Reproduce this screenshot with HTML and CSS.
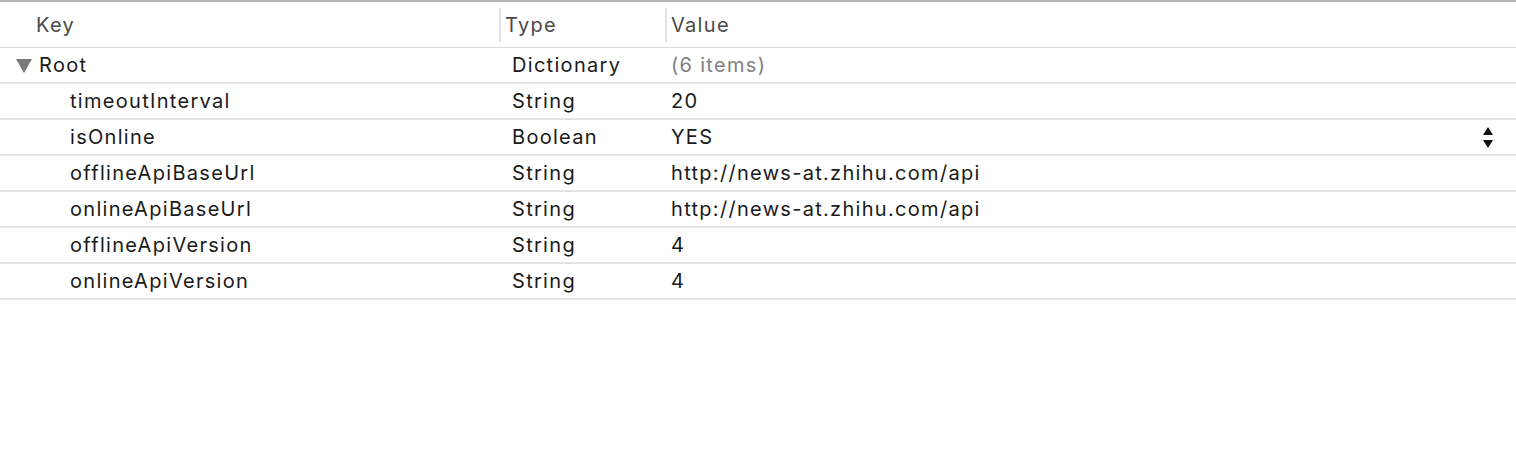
FILE: index.html
```html
<!DOCTYPE html>
<html>
<head>
<meta charset="utf-8">
<link rel="stylesheet" href="styles.css">
</head>
<body>
<div class="table">
  <div class="header">
    <div class="hcell key">Key</div>
    <div class="hcell type">Type</div>
    <div class="hcell value">Value</div>
  </div>
  <div class="row">
    <div class="cell key root"><span class="tri"></span>Root</div>
    <div class="cell type">Dictionary</div>
    <div class="cell value muted">(6 items)</div>
  </div>
  <div class="row">
    <div class="cell key child">timeoutInterval</div>
    <div class="cell type">String</div>
    <div class="cell value">20</div>
  </div>
  <div class="row">
    <div class="cell key child">isOnline</div>
    <div class="cell type">Boolean</div>
    <div class="cell value stretch">YES</div>
    <div class="stepper"><span class="up"></span><span class="down"></span></div>
  </div>
  <div class="row">
    <div class="cell key child">offlineApiBaseUrl</div>
    <div class="cell type">String</div>
    <div class="cell value">http://news-at.zhihu.com/api</div>
  </div>
  <div class="row">
    <div class="cell key child">onlineApiBaseUrl</div>
    <div class="cell type">String</div>
    <div class="cell value">http://news-at.zhihu.com/api</div>
  </div>
  <div class="row">
    <div class="cell key child">offlineApiVersion</div>
    <div class="cell type">String</div>
    <div class="cell value">4</div>
  </div>
  <div class="row">
    <div class="cell key child">onlineApiVersion</div>
    <div class="cell type">String</div>
    <div class="cell value">4</div>
  </div>
</div>
</body>
</html>
```
FILE: styles.css
```css
html, body {
  margin: 0;
  padding: 0;
  background: #ffffff;
}
body {
  font-family: "Inter", "Liberation Sans", sans-serif;
  font-size: 20px;
  letter-spacing: 1.3px;
  color: #1a1a1a;
  width: 1516px;
  height: 454px;
  overflow: hidden;
}
.table {
  border-top: 2px solid #b4b4b4;
}
.header {
  display: flex;
  height: 45px;
  border-bottom: 1px solid #dcdcdc;
  align-items: center;
  color: #4a4a4a;
}
.hcell {
  height: 34px;
  display: flex;
  align-items: center;
  box-sizing: border-box;
}
.header .key {
  width: 499px;
  padding-left: 36px;
}
.header .type {
  width: 166px;
  border-left: 2px solid #e2e2e2;
  padding-left: 4px;
}
.header .value {
  border-left: 2px solid #e2e2e2;
  padding-left: 4px;
}
.row {
  display: flex;
  align-items: center;
  height: 34px;
  border-bottom: 2px solid #e3e3e3;
}
.cell {
  line-height: 34px;
}
.row .key {
  width: 512px;
  box-sizing: border-box;
  display: flex;
  align-items: center;
}
.row .key.root {
  padding-left: 16px;
}
.row .key.child {
  padding-left: 70px;
}
.row .type {
  width: 159px;
}
.value {
  flex: 1;
}
.muted {
  color: #808080;
}
.tri {
  width: 0;
  height: 0;
  border-left: 8px solid transparent;
  border-right: 8px solid transparent;
  border-top: 14px solid #7a7a7a;
  margin-right: 7px;
  margin-top: 2px;
}
.stepper {
  width: 12px;
  display: flex;
  flex-direction: column;
  align-items: center;
  gap: 5px;
  margin-right: 22px;
}
.stepper .up {
  width: 0;
  height: 0;
  border-left: 5px solid transparent;
  border-right: 5px solid transparent;
  border-bottom: 8px solid #111;
}
.stepper .down {
  width: 0;
  height: 0;
  border-left: 5px solid transparent;
  border-right: 5px solid transparent;
  border-top: 8px solid #111;
}
```
